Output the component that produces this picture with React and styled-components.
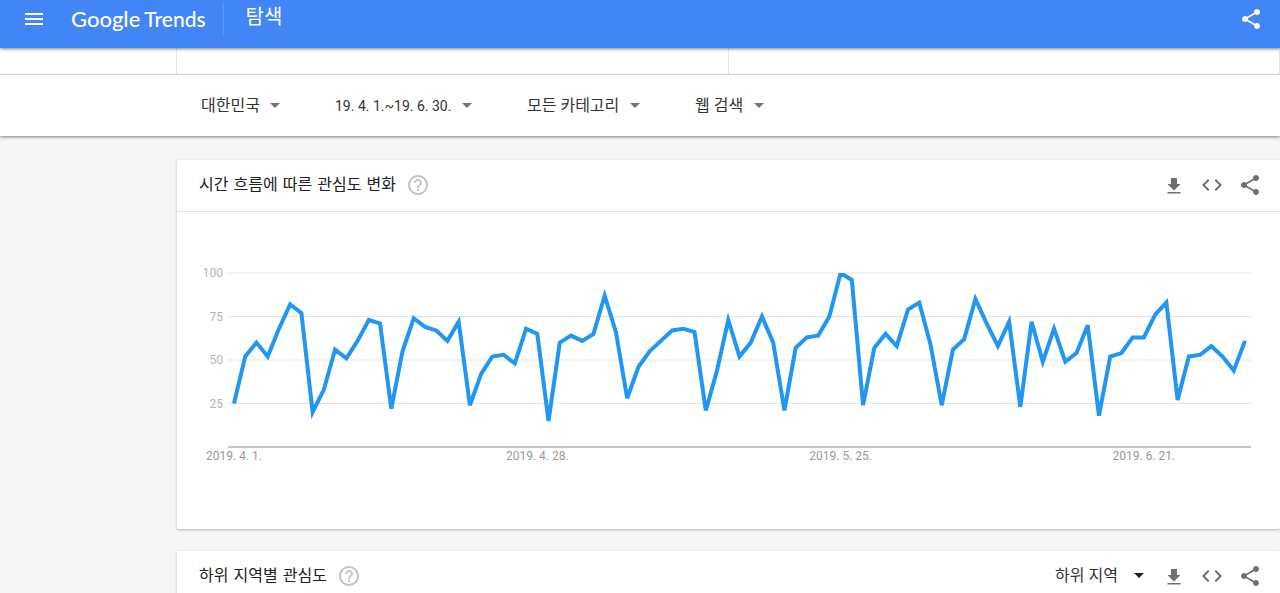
import React from "react";
import styled, { createGlobalStyle } from "styled-components";

const GlobalStyle = createGlobalStyle`
  *, *::before, *::after { box-sizing: border-box; }
  body {
    margin: 0;
    background: #f6f6f6;
    color: #212121;
    font-family: Roboto, "Noto Sans CJK KR", sans-serif;
    font-size: 16px;
    line-height: 24px;
  }
`;

const Page = styled.div`
  display: flex;
  flex-direction: column;
  height: 100vh;
  overflow: hidden;
`;

const TopBar = styled.header`
  position: relative;
  z-index: 2;
  flex: none;
  display: flex;
  align-items: center;
  height: 48px;
  padding: 0 17px 10px 22px;
  background: #4285f4;
  color: #fff;
  box-shadow: 0 1px 3px rgba(0, 0, 0, 0.5);
`;

const IconButton = styled.button`
  display: flex;
  padding: 0;
  border: 0;
  background: none;
  color: inherit;
  cursor: pointer;
`;

const Logo = styled.a`
  display: flex;
  align-items: baseline;
  gap: 4px;
  margin-left: 25px;
  color: #fff;
  font-family: Lato, sans-serif;
  font-size: 22px;
  font-weight: 500;
  text-decoration: none;
`;

const LogoProduct = styled.span`
  font-size: 21px;
`;

const PageTitle = styled.h1`
  flex: 1;
  margin: 0 0 0 17px;
  padding: 0 0 4px 22px;
  border-left: 1px solid #5c96f6;
  font-size: 20px;
  font-weight: 400;
  line-height: 28px;
`;

const TermRow = styled.div`
  flex: none;
  display: flex;
  height: 27px;
  padding-left: 176px;
  background: #fff;
  border-bottom: 1px solid #e6e6e6;
`;

const TermCell = styled.div`
  flex: 1;
  border-left: 1px solid #e6e6e6;

  &:last-child {
    border-right: 1px solid #e6e6e6;
  }
`;

const FilterBar = styled.form`
  position: relative;
  z-index: 1;
  flex: none;
  display: flex;
  align-items: center;
  gap: 55px;
  height: 61px;
  padding-left: 201px;
  background: #fff;
  box-shadow: 0 1px 3px rgba(0, 0, 0, 0.5);
`;

const Picker = styled.label`
  display: flex;
  align-items: center;
  gap: ${(p) => (p.$wide ? 16 : 10)}px;
  margin-right: ${(p) => (p.$wide ? 4 : 0)}px;
  color: ${(p) => (p.$wide ? "#212121" : "#757575")};
`;

const Select = styled.select`
  appearance: none;
  padding: 0;
  border: 0;
  background: none;
  color: #333;
  font: inherit;
  font-size: ${(p) => (p.$numeric ? 14 : 16)}px;
  cursor: pointer;
`;

const Main = styled.main`
  display: flex;
  flex-direction: column;
  gap: 22px;
  padding: 24px 0 22px 177px;
`;

const Card = styled.section`
  flex: none;
  background: #fff;
  border-radius: 2px;
  box-shadow: 0 1px 3px rgba(0, 0, 0, 0.25);
`;

const CardHeader = styled.header`
  display: flex;
  align-items: center;
  height: 52px;
  padding: 0 18px 2px 22px;
  border-bottom: 1px solid #e6e6e6;
`;

const CardTitle = styled.h2`
  margin: 0;
  font-family: "DejaVu Sans", "Noto Sans CJK KR", sans-serif;
  font-size: 16px;
  font-weight: 400;
`;

const HelpButton = styled(IconButton)`
  margin-left: 10px;
  color: #c4c4c4;
`;

const Actions = styled.div`
  display: flex;
  align-items: center;
  gap: 14px;
  margin-left: auto;
  color: #6f6f6f;
`;

const ChartArea = styled.div`
  padding: 61px 29px 82px 51px;
`;

const Chart = styled.svg`
  display: block;
  width: 100%;
  height: 174px;
  overflow: visible;

  text {
    font-size: 12px;
  }
`;

const ICONS = {
  menu: "M3 18h18v-2H3v2zm0-5h18v-2H3v2zm0-7v2h18V6H3z",
  share:
    "M18 16.08c-.76 0-1.44.3-1.96.77L8.91 12.7c.05-.23.09-.46.09-.7s-.04-.47-.09-.7l7.05-4.11c.54.5 1.25.81 2.04.81 1.66 0 3-1.34 3-3s-1.34-3-3-3-3 1.34-3 3c0 .24.04.47.09.7L8.04 9.81C7.5 9.31 6.79 9 6 9c-1.66 0-3 1.34-3 3s1.34 3 3 3c.79 0 1.5-.31 2.04-.81l7.12 4.16c-.05.21-.08.43-.08.65 0 1.61 1.31 2.92 2.92 2.92s2.92-1.31 2.92-2.92-1.31-2.92-2.92-2.92z",
  download: "M18.5 11H15V5H9v6H5.500l6.500 6.500 6.500-6.500zM5.500 19v1.500h13V19h-13z",
  code: "M9.400 16.600L4.800 12l4.600-4.600L8 6l-6 6 6 6 1.400-1.400zm5.200 0l4.600-4.600-4.600-4.600L16 6l6 6-6 6-1.400-1.400z",
  help: "M11 18h2v-2h-2v2zm1-16C6.480 2 2 6.480 2 12s4.480 10 10 10 10-4.480 10-10S17.520 2 12 2zm0 18c-4.410 0-8-3.590-8-8s3.590-8 8-8 8 3.590 8 8-3.590 8-8 8zm0-14c-2.210 0-4 1.790-4 4h2c0-1.100.9-2 2-2s2 .9 2 2c0 2-3 1.750-3 5h2c0-2.250 3-2.500 3-5 0-2.210-1.790-4-4-4z",
};

function Icon({ name }) {
  return (
    <svg width="24" height="24" viewBox="0 0 24 24" fill="currentColor" aria-hidden="true">
      <path d={ICONS[name]} />
    </svg>
  );
}

function Arrow() {
  return (
    <svg width="10" height="5" viewBox="0 0 10 5" fill="currentColor" aria-hidden="true">
      <path d="M0 0h10L5 5z" />
    </svg>
  );
}

function Dropdown({ label, value, wide, numeric }) {
  return (
    <Picker $wide={wide}>
      <Select aria-label={label} defaultValue={value} $numeric={numeric}>
        <option>{value}</option>
      </Select>
      <Arrow />
    </Picker>
  );
}

function CardActions({ children }) {
  return (
    <Actions>
      {children}
      <IconButton aria-label="CSV"><Icon name="download" /></IconButton>
      <IconButton aria-label="삽입"><Icon name="code" /></IconButton>
      <IconButton aria-label="공유"><Icon name="share" /></IconButton>
    </Actions>
  );
}

const INTEREST = [
  25, 52, 60, 52, 68, 82, 77, 20, 33, 56, 51, 61, 73, 71, 22, 55, 74, 69, 67,
  61, 72, 24, 42, 52, 53, 48, 68, 65, 15, 60, 64, 61, 65, 87, 66, 28, 46, 55,
  61, 67, 68, 66, 21, 44, 73, 52, 60, 75, 60, 21, 57, 63, 64, 75, 100, 96, 24,
  57, 65, 58, 79, 83, 59, 24, 56, 62, 85, 71, 58, 72, 23, 72, 49, 68, 49, 54,
  70, 18, 52, 54, 63, 63, 76, 83, 27, 52, 53, 58, 52, 44, 61,
];
const DATES = [
  [0, "2019. 4. 1."],
  [27, "2019. 4. 28."],
  [54, "2019. 5. 25."],
  [81, "2019. 6. 21."],
];
const PLOT_WIDTH = 1023;
const PLOT_HEIGHT = 174;
const INSET = 6;
const xOf = (day) => INSET + (day * (PLOT_WIDTH - 2 * INSET)) / (INTEREST.length - 1);
const yOf = (value) => PLOT_HEIGHT * (1 - value / 100);

function InterestChart() {
  const points = INTEREST.map((v, i) => `${xOf(i)},${yOf(v)}`).join(" ");
  return (
    <Chart role="img" aria-label="시간 흐름에 따른 관심도 변화">
      {[100, 75, 50, 25].map((v) => (
        <g key={v}>
          <line x1="0" x2="100%" y1={yOf(v)} y2={yOf(v)} stroke="#e4e4e4" />
          <text x="-5" y={yOf(v) + 4} textAnchor="end" fill="#b5b5b5">{v}</text>
        </g>
      ))}
      <line x1="0" x2="100%" y1={PLOT_HEIGHT} y2={PLOT_HEIGHT} stroke="#c4c4c4" strokeWidth="2" />
      <svg
        width="100%"
        height={PLOT_HEIGHT}
        viewBox={`0 0 ${PLOT_WIDTH} ${PLOT_HEIGHT}`}
        preserveAspectRatio="none"
        overflow="hidden"
      >
        <polyline
          points={points}
          fill="none"
          stroke="#2196f3"
          strokeWidth="4"
          strokeMiterlimit="3.94"
          vectorEffect="non-scaling-stroke"
        />
      </svg>
      {DATES.map(([day, text]) => (
        <text
          key={day}
          x={`${(xOf(day) / PLOT_WIDTH) * 100}%`}
          y={PLOT_HEIGHT + 13}
          textAnchor="middle"
          fill="#999"
        >
          {text}
        </text>
      ))}
    </Chart>
  );
}

export default function App() {
  return (
    <Page>
      <GlobalStyle />
      <TopBar>
        <IconButton aria-label="메뉴"><Icon name="menu" /></IconButton>
        <Logo href="#">
          <span>Google</span>
          <LogoProduct>Trends</LogoProduct>
        </Logo>
        <PageTitle>탐색</PageTitle>
        <IconButton aria-label="공유"><Icon name="share" /></IconButton>
      </TopBar>
      <TermRow>
        <TermCell />
        <TermCell />
      </TermRow>
      <FilterBar>
        <Dropdown label="국가" value="대한민국" />
        <Dropdown label="기간" value="19. 4. 1.~19. 6. 30." numeric />
        <Dropdown label="카테고리" value="모든 카테고리" />
        <Dropdown label="검색 유형" value="웹 검색" />
      </FilterBar>
      <Main>
        <Card>
          <CardHeader>
            <CardTitle>시간 흐름에 따른 관심도 변화</CardTitle>
            <HelpButton aria-label="도움말"><Icon name="help" /></HelpButton>
            <CardActions />
          </CardHeader>
          <ChartArea>
            <InterestChart />
          </ChartArea>
        </Card>
        <Card>
          <CardHeader>
            <CardTitle>하위 지역별 관심도</CardTitle>
            <HelpButton aria-label="도움말"><Icon name="help" /></HelpButton>
            <CardActions>
              <Dropdown label="지역 단위" value="하위 지역" wide />
            </CardActions>
          </CardHeader>
        </Card>
      </Main>
    </Page>
  );
}
